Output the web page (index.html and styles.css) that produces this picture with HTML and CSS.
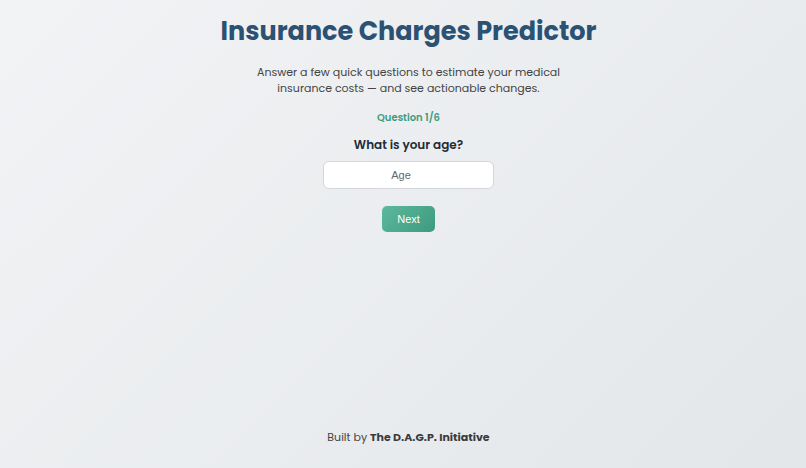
FILE: index.html
```html
<!DOCTYPE html>
<html lang="en">
<head>
    <meta charset="UTF-8">
    <meta name="viewport" content="width=device-width, initial-scale=1.0">
    <title>Insurance Charges Predictor</title>
    <link rel="stylesheet" href="styles.css">
</head>
<body>
    <main class="page">
        <h1 class="title">Insurance Charges Predictor</h1>
        <p class="subtitle">Answer a few quick questions to estimate your medical insurance costs — and see actionable changes.</p>

        <div class="quiz">
            <div class="step">Question 1/6</div>
            <h2 class="question">What is your age?</h2>
            <input type="number" class="answer" placeholder="Age">
            <button class="next-btn">Next</button>
        </div>
    </main>

    <footer class="footer">
        Built by <strong>The D.A.G.P. Initiative</strong>
    </footer>
</body>
</html>
```

FILE: styles.css
```css
:root {
    font-family: Poppins, Inter, "Noto Sans", sans-serif;
    color: #333;
}

body {
    margin: 0;
    padding-left: 11px;
    min-height: 100vh;
    display: flex;
    flex-direction: column;
    background: linear-gradient(135deg, #f2f3f5 0%, #e3e7ea 100%);
}

.page {
    flex: 1;
    display: flex;
    flex-direction: column;
    align-items: center;
    padding-top: 12px;
}

.title {
    margin: 0;
    font-size: 25.5px;
    line-height: 38px;
    font-weight: 700;
    color: #2b5173;
}

.subtitle {
    margin: 14px 0 0;
    max-width: 320px;
    text-align: center;
    font-size: 11px;
    line-height: 16px;
    color: #444;
}

.quiz {
    display: flex;
    flex-direction: column;
    align-items: center;
    margin-top: 14px;
}

.step {
    font-size: 10px;
    line-height: 15px;
    font-weight: 600;
    color: #3f9b7f;
}

.question {
    margin: 11px 0 0;
    font-size: 12px;
    line-height: 18px;
    font-weight: 600;
    color: #222b36;
}

.answer {
    margin-top: 7px;
    width: 171px;
    height: 28px;
    box-sizing: border-box;
    border: 1px solid #d3d6da;
    border-radius: 6px;
    background: #fff;
    text-align: center;
    font-family: "Liberation Sans", Arial, sans-serif;
    font-size: 11px;
}

.answer::placeholder {
    color: #666;
}

.next-btn {
    margin-top: 17px;
    width: 53px;
    height: 26px;
    border: none;
    border-radius: 5px;
    background: linear-gradient(135deg, #5cb99c, #3e9a7e);
    color: #fff;
    font-family: "Liberation Sans", Arial, sans-serif;
    font-size: 11px;
    cursor: pointer;
}

.footer {
    text-align: center;
    font-size: 11px;
    line-height: 16px;
    color: #444;
    padding-bottom: 23px;
}

.footer strong {
    color: #3a3a3a;
}
```
